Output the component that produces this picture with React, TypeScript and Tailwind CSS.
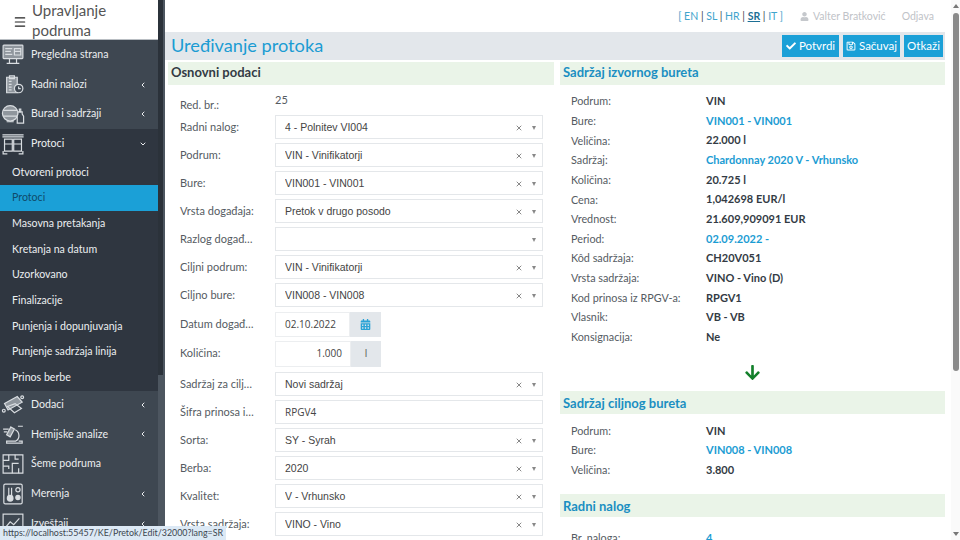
import { ChevronDown, ChevronLeft, Menu, X } from "lucide-react";
import { FaArrowDown, FaCalendarAlt, FaCheck, FaRegSave, FaUser } from "react-icons/fa";

const Ico = ({ kind }: { kind: number }) => {
  const c = "#d9dde1";
  const parts = [
    <g key="0"><rect x="3" y="2" width="28" height="19" rx="1" fill="#8f969d" /><path d="M6 7h10M6 11h8M6 15h10M19 7h9v9h-9zM19 11h9M12 21v6M22 21v6M8 28h18" /></g>,
    <g key="1"><path d="M8 5h15v22H8z" fill="#8f969d" /><path d="M12 3h7v4h-7zM11 11h4M11 15h4M11 19h4M11 23h4" /><circle cx="25" cy="21" r="6" fill="#3e4751" /><path d="M25 18v3h3" /></g>,
    <g key="2"><circle cx="13" cy="15" r="11" fill="#8f969d" /><path d="M3 11h20M3 19h20M8 27h10" /><path d="M24 13h6v3l2 3v10h-9V19l1-3z" fill="#3e4751" /><path d="M26 9h2v4h-2z" /></g>,
    <g key="3"><path d="M2 3h30M2 6h30" /><path d="M5 9h11v17H5zM18 9h11v17H18zM5 16h11M18 16h11M3 26v4h6M31 26v4h-6" /></g>,
    <g key="4"><path d="M5 14l18-10 7 8-20 11z" fill="#8f969d" /><path d="M9 18l10 9 10-6-9-7z" /><circle cx="4" cy="24" r="2" /><circle cx="30" cy="5" r="2" /></g>,
    <g key="5"><path d="M14 6l5 3-6 11-5-3z" fill="#8f969d" /><path d="M20 10a9 9 0 0 1 1 16H8v3h22v-3h-5" /><path d="M3 9h8M4 13h5M24 5h7" /></g>,
    <g key="6"><path d="M3 3h28v26H3z" /><path d="M11 3v8H3M20 3v6h5M25 15h-9v14M3 19h8v4M25 22v7" /></g>,
    <g key="7"><rect x="4" y="2" width="26" height="28" rx="2" /><path d="M11 7v13M15 7v13" /><circle cx="13" cy="22" r="4" fill="#d9dde1" /><circle cx="24" cy="10" r="3" /><circle cx="24" cy="21" r="3" fill="#d9dde1" /></g>,
    <g key="8"><rect x="3" y="2" width="28" height="26" /><path d="M7 20l6-7 5 4 8-9" /></g>,
  ];
  return (
    <svg width="24" height="24" viewBox="0 0 34 32" fill="none" stroke={c} strokeWidth="1.7" className="shrink-0">
      {parts[kind]}
    </svg>
  );
};

const MainItem = ({ kind, label, arrow, open }: { kind: number; label: string; arrow?: boolean; open?: boolean }) => (
  <div className={`flex items-center h-[29.7px] pl-[1px] pr-[11px] text-[#eceef0] ${open ? "bg-[#2f3640]" : ""}`}>
    <Ico kind={kind} />
    <span className="ml-[6px] flex-1 truncate">{label}</span>
    {arrow && (open ? <ChevronDown size={8} strokeWidth={3} /> : <ChevronLeft size={8} strokeWidth={3} />)}
  </div>
);

const SubItem = ({ label, active }: { label: string; active?: boolean }) => (
  <div className={`flex items-center h-[25.7px] pl-[12px] ${active ? "bg-[#1ba0d7] text-[#0f4b6b]" : "text-[#eceef0]"}`}>{label}</div>
);

const Label = ({ text }: { text: string }) => (
  <div className="w-[107px] shrink-0 truncate pl-[12px] pr-[20px] text-[#555b62]">{text}</div>
);

const Sel = ({ label, value, clear = true }: { label: string; value: string; clear?: boolean }) => (
  <div className="flex items-center h-[28px]">
    <Label text={label} />
    <div className="flex items-center w-[268px] h-[24px] border border-[#e4e7ea] bg-white pl-[9px] pr-[6px] pt-[1px] text-[10.5px] text-[#444] font-['Liberation_Sans',sans-serif]">
      <span className="flex-1 truncate">{value}</span>
      {clear && <X size={8} strokeWidth={3} className="text-[#888]" />}
      <span className="ml-[9px] w-0 h-0 border-x-[2.5px] border-x-transparent border-t-[4px] border-t-[#888]" />
    </div>
  </div>
);

const Field = ({ k, v, tone }: { k: string; v: string; tone?: boolean }) => (
  <div className="flex items-center h-[19.67px]">
    <div className="w-[146px] pl-[11px] shrink-0 text-[10.8px] text-[#555b62]">{k}</div>
    <div className={`font-bold ${tone ? "text-[#1b9cd3]" : "text-[#333b44]"}`}>{v}</div>
  </div>
);

const Section = ({ title, blue, low }: { title: string; blue?: boolean; low?: boolean }) => (
  <div className={`h-[23px] flex items-center px-[3px] bg-[#eaf4e8] font-bold text-[13px] ${low ? "pt-[2px]" : "pb-[1px]"} ${blue ? "text-[#1b8fc2]" : "text-[#333b44]"}`}>{title}</div>
);

export default function App() {
  return (
    <div className="relative flex h-[540px] w-[960px] overflow-hidden bg-white font-['Lato',sans-serif] text-[11px]">
      <aside className="flex w-[165px] shrink-0 bg-[#3e4751] text-[10.6px]">
        <div className="w-[158px] shrink-0">
          <div className="flex h-[40px] items-center bg-white border-b border-[#b9bec3] text-[#555]">
            <Menu size={14} className="ml-[13px] mt-[4px] shrink-0 text-[#222]" strokeWidth={2} />
            <div className="ml-[5px] text-[15px] leading-[20px]">Upravljanje<br />podruma</div>
          </div>
          <div>
            <MainItem kind={0} label="Pregledna strana" />
            <MainItem kind={1} label="Radni nalozi" arrow />
            <MainItem kind={2} label="Burad i sadržaji" arrow />
            <MainItem kind={3} label="Protoci" arrow open />
            <div className="bg-[#2f3640] pt-[1px]">
              <SubItem label="Otvoreni protoci" />
              <SubItem label="Protoci" active />
              <SubItem label="Masovna pretakanja" />
              <SubItem label="Kretanja na datum" />
              <SubItem label="Uzorkovano" />
              <SubItem label="Finalizacije" />
              <SubItem label="Punjenja i dopunjuvanja" />
              <SubItem label="Punjenje sadržaja linija" />
              <SubItem label="Prinos berbe" />
            </div>
            <div className="-mt-[1px]">
              <MainItem kind={4} label="Dodaci" arrow />
              <MainItem kind={5} label="Hemijske analize" arrow />
              <MainItem kind={6} label="Šeme podruma" />
              <MainItem kind={7} label="Merenja" arrow />
              <MainItem kind={8} label="Izveštaji" arrow />
            </div>
          </div>
        </div>
        <div className="w-[7px] bg-[#4d5660]">
          <div className="h-[375px] w-[5px] bg-[#2b323a]" />
        </div>
      </aside>

      <main className="flex min-w-0 flex-1 flex-col">
        <div className="flex h-[32px] shrink-0 items-center justify-end pr-[17px] pt-[1px] text-[10.5px] text-[#bfc3c8]">
          <span className="text-[#3c4650]"><span className="text-[#3fa4cc]">[ EN</span> | <span className="text-[#3fa4cc]">SL</span> | <span className="text-[#3fa4cc]">HR</span> | <b className="underline text-[#1d6f95]">SR</b> | <span className="text-[#3fa4cc]">IT ]</span></span>
          <FaUser size={9} className="ml-[17px] mr-[4px] text-[#c5c8cc]" />
          <span>Valter Bratković</span>
          <span className="ml-[16px]">Odjava</span>
        </div>
        <div className="mr-[6px] flex h-[28px] shrink-0 items-center justify-between bg-[#e3e7eb] pl-[6px] pr-[2px]">
          <h1 className="text-[18.2px] text-[#1b9cd3]">Uređivanje protoka</h1>
          <div className="flex gap-[4px] text-[11.5px] text-white">
            <div className="flex h-[22px] w-[57px] items-center justify-center gap-[3px] bg-[#1ba0d7]"><FaCheck size={10} />Potvrdi</div>
            <div className="flex h-[22px] w-[57px] items-center justify-center gap-[3px] bg-[#1ba0d7]"><FaRegSave size={10} />Sačuvaj</div>
            <div className="flex h-[22px] w-[39px] items-center justify-center bg-[#1ba0d7]">Otkaži</div>
          </div>
        </div>
        <div className="mt-[2px] flex min-h-0 flex-1 overflow-hidden pl-[3px] pr-[6px]">
          <section className="w-[386px] shrink-0">
            <Section title="Osnovni podaci" />
            <div className="flex h-[30px] items-center mt-[5px]">
              <Label text="Red. br.:" />
              <span className="mt-[-9px] text-[#555b62]">25</span>
            </div>
            <div className="-mt-[7px]">
              <Sel label="Radni nalog:" value="4 - Polnitev VI004" />
              <Sel label="Podrum:" value="VIN - Vinifikatorji" />
              <Sel label="Bure:" value="VIN001 - VIN001" />
              <Sel label="Vrsta događaja:" value="Pretok v drugo posodo" />
              <Sel label="Razlog događaja:" value="" clear={false} />
              <Sel label="Ciljni podrum:" value="VIN - Vinifikatorji" />
              <Sel label="Ciljno bure:" value="VIN008 - VIN008" />
            </div>
            <div className="h-[1px]" />
            <div className="flex h-[29px] items-center">
              <Label text="Datum događaja:" />
              <div className="flex h-[25px] w-[75px] items-center border border-[#eceef0] pl-[9px] font-['Open_Sans',sans-serif] text-[10px] text-[#444]">02.10.2022</div>
              <div className="flex h-[25px] w-[31px] items-center justify-center bg-[#e3e7eb]"><FaCalendarAlt size={11} className="text-[#2aa3d6]" /></div>
            </div>
            <div className="flex h-[29px] items-center">
              <Label text="Količina:" />
              <div className="flex h-[26px] w-[76px] items-center justify-end border border-[#eceef0] pr-[8px] font-['Open_Sans',sans-serif] text-[10px] text-[#444]">1.000</div>
              <div className="flex h-[26px] w-[30px] items-center justify-center bg-[#e3e7eb] font-['Open_Sans',sans-serif] text-[10px] text-[#555]">l</div>
            </div>
            <div className="h-[2px]" />
            <Sel label="Sadržaj za ciljno bure:" value="Novi sadržaj" />
            <div className="flex h-[28px] items-center">
              <Label text="Šifra prinosa iz RPGV-a:" />
              <div className="flex h-[24px] w-[268px] items-center border border-[#e4e7ea] pl-[9px] font-['Open_Sans',sans-serif] text-[10px] text-[#444]">RPGV4</div>
            </div>
            <Sel label="Sorta:" value="SY - Syrah" />
            <Sel label="Berba:" value="2020" />
            <Sel label="Kvalitet:" value="V - Vrhunsko" />
            <Sel label="Vrsta sadržaja:" value="VINO - Vino" />
          </section>
          <section className="ml-[6px] min-w-0 flex-1">
            <Section title="Sadržaj izvornog bureta" blue />
            <div className="pt-[6.5px]">
              <Field k="Podrum:" v="VIN" />
              <Field k="Bure:" v="VIN001 - VIN001" tone />
              <Field k="Veličina:" v="22.000 l" />
              <Field k="Sadržaj:" v="Chardonnay 2020 V - Vrhunsko" tone />
              <Field k="Količina:" v="20.725 l" />
              <Field k="Cena:" v="1,042698 EUR/l" />
              <Field k="Vrednost:" v="21.609,909091 EUR" />
              <Field k="Period:" v="02.09.2022 -" tone />
              <Field k="Kôd sadržaja:" v="CH20V051" />
              <Field k="Vrsta sadržaja:" v="VINO - Vino (D)" />
              <Field k="Kod prinosa iz RPGV-a:" v="RPGV1" />
              <Field k="Vlasnik:" v="VB - VB" />
              <Field k="Konsignacija:" v="Ne" />
            </div>
            <div className="flex h-[44px] items-center justify-center pt-[6px]">
              <FaArrowDown size={17} className="text-[#13802b]" />
            </div>
            <Section title="Sadržaj ciljnog bureta" blue low />
            <div className="pt-[7px]">
              <Field k="Podrum:" v="VIN" />
              <Field k="Bure:" v="VIN008 - VIN008" tone />
              <Field k="Veličina:" v="3.800" />
            </div>
            <div className="mt-[14px]"><Section title="Radni nalog" blue low /></div>
            <div className="pt-[11px]">
              <Field k="Br. naloga:" v="4" tone />
            </div>
          </section>
        </div>
      </main>

      <div className="flex w-[9px] shrink-0 flex-col items-center bg-[#fafafa]">
        <div className="mt-[4px] h-0 w-0 border-x-[3px] border-x-transparent border-b-[4px] border-b-[#777]" />
        <div className="mt-[5px] h-[358px] w-[6px] rounded-[3px] bg-[#8a8a8a]" />
        <div className="mt-auto mb-[4px] h-0 w-0 border-x-[3px] border-x-transparent border-t-[4px] border-t-[#777]" />
      </div>

      <div className="absolute bottom-0 left-0 flex h-[14px] w-[226px] items-center whitespace-nowrap bg-[#dce9f5] pl-[3px] text-[8.9px] text-[#3c4650]">
        https://localhost:55457/KE/Pretok/Edit/32000?lang=SR
      </div>
    </div>
  );
}
